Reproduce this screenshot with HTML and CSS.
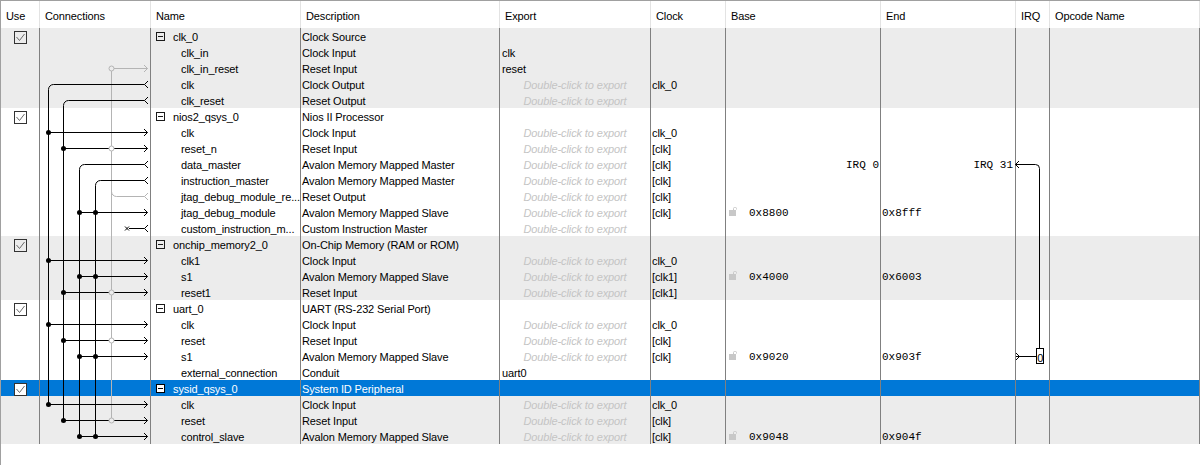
FILE: index.html
```html
<!DOCTYPE html>
<html>
<head>
<meta charset="utf-8">
<link rel="stylesheet" href="styles.css">
</head>
<body>
<div class="tbl">
  <div class="hdr">
    <div class="c u">Use</div><div class="c cn">Connections</div><div class="c nm">Name</div><div class="c ds">Description</div><div class="c ex">Export</div><div class="c ck">Clock</div><div class="c bs">Base</div><div class="c en">End</div><div class="c iq">IRQ</div><div class="c op">Opcode Name</div>
  </div>
  <div class="rows">
    <!-- clk_0 -->
    <div class="row g"><div class="c u"><svg class="cb" viewBox="0 0 13 13"><rect x="0.5" y="0.5" width="12" height="12"/><path d="M2.5 6L5.5 9.5L10.5 3"/></svg></div><div class="c cn"></div><div class="c nm mod"><svg class="exp" viewBox="0 0 9 9"><rect x="0.5" y="0.5" width="8" height="8"/><path d="M2 4.5H7"/></svg><span class="lbl">clk_0</span></div><div class="c ds">Clock Source</div><div class="c ex"></div><div class="c ck"></div><div class="c bs"></div><div class="c en"></div><div class="c iq"></div><div class="c op"></div></div>
    <div class="row g"><div class="c u"></div><div class="c cn"></div><div class="c nm">clk_in</div><div class="c ds">Clock Input</div><div class="c ex">clk</div><div class="c ck"></div><div class="c bs"></div><div class="c en"></div><div class="c iq"></div><div class="c op"></div></div>
    <div class="row g"><div class="c u"></div><div class="c cn"></div><div class="c nm">clk_in_reset</div><div class="c ds">Reset Input</div><div class="c ex">reset</div><div class="c ck"></div><div class="c bs"></div><div class="c en"></div><div class="c iq"></div><div class="c op"></div></div>
    <div class="row g"><div class="c u"></div><div class="c cn"></div><div class="c nm">clk</div><div class="c ds">Clock Output</div><div class="c ex dc">Double-click to export</div><div class="c ck">clk_0</div><div class="c bs"></div><div class="c en"></div><div class="c iq"></div><div class="c op"></div></div>
    <div class="row g"><div class="c u"></div><div class="c cn"></div><div class="c nm">clk_reset</div><div class="c ds">Reset Output</div><div class="c ex dc">Double-click to export</div><div class="c ck"></div><div class="c bs"></div><div class="c en"></div><div class="c iq"></div><div class="c op"></div></div>
    <!-- nios2 -->
    <div class="row w"><div class="c u"><svg class="cb" viewBox="0 0 13 13"><rect x="0.5" y="0.5" width="12" height="12"/><path d="M2.5 6L5.5 9.5L10.5 3"/></svg></div><div class="c cn"></div><div class="c nm mod"><svg class="exp" viewBox="0 0 9 9"><rect x="0.5" y="0.5" width="8" height="8"/><path d="M2 4.5H7"/></svg><span class="lbl">nios2_qsys_0</span></div><div class="c ds">Nios II Processor</div><div class="c ex"></div><div class="c ck"></div><div class="c bs"></div><div class="c en"></div><div class="c iq"></div><div class="c op"></div></div>
    <div class="row w"><div class="c u"></div><div class="c cn"></div><div class="c nm">clk</div><div class="c ds">Clock Input</div><div class="c ex dc">Double-click to export</div><div class="c ck">clk_0</div><div class="c bs"></div><div class="c en"></div><div class="c iq"></div><div class="c op"></div></div>
    <div class="row w"><div class="c u"></div><div class="c cn"></div><div class="c nm">reset_n</div><div class="c ds">Reset Input</div><div class="c ex dc">Double-click to export</div><div class="c ck">[clk]</div><div class="c bs"></div><div class="c en"></div><div class="c iq"></div><div class="c op"></div></div>
    <div class="row w"><div class="c u"></div><div class="c cn"></div><div class="c nm">data_master</div><div class="c ds">Avalon Memory Mapped Master</div><div class="c ex dc">Double-click to export</div><div class="c ck">[clk]</div><div class="c bs r">IRQ 0</div><div class="c en r">IRQ 31</div><div class="c iq"></div><div class="c op"></div></div>
    <div class="row w"><div class="c u"></div><div class="c cn"></div><div class="c nm">instruction_master</div><div class="c ds">Avalon Memory Mapped Master</div><div class="c ex dc">Double-click to export</div><div class="c ck">[clk]</div><div class="c bs"></div><div class="c en"></div><div class="c iq"></div><div class="c op"></div></div>
    <div class="row w"><div class="c u"></div><div class="c cn"></div><div class="c nm">jtag_debug_module_re...</div><div class="c ds">Reset Output</div><div class="c ex dc">Double-click to export</div><div class="c ck">[clk]</div><div class="c bs"></div><div class="c en"></div><div class="c iq"></div><div class="c op"></div></div>
    <div class="row w"><div class="c u"></div><div class="c cn"></div><div class="c nm">jtag_debug_module</div><div class="c ds">Avalon Memory Mapped Slave</div><div class="c ex dc">Double-click to export</div><div class="c ck">[clk]</div><div class="c bs"><svg class="lock" viewBox="0 0 9 9"><rect x="0" y="3" width="7" height="6"/><path d="M4.5 3.5V1.5Q4.5 0.5 5.5 0.5H6.5Q7.5 0.5 7.5 1.5V2.5"/></svg><span class="hex">0x8800</span></div><div class="c en">0x8fff</div><div class="c iq"></div><div class="c op"></div></div>
    <div class="row w"><div class="c u"></div><div class="c cn"></div><div class="c nm">custom_instruction_m...</div><div class="c ds">Custom Instruction Master</div><div class="c ex dc">Double-click to export</div><div class="c ck"></div><div class="c bs"></div><div class="c en"></div><div class="c iq"></div><div class="c op"></div></div>
    <!-- onchip -->
    <div class="row g"><div class="c u"><svg class="cb" viewBox="0 0 13 13"><rect x="0.5" y="0.5" width="12" height="12"/><path d="M2.5 6L5.5 9.5L10.5 3"/></svg></div><div class="c cn"></div><div class="c nm mod"><svg class="exp" viewBox="0 0 9 9"><rect x="0.5" y="0.5" width="8" height="8"/><path d="M2 4.5H7"/></svg><span class="lbl">onchip_memory2_0</span></div><div class="c ds">On-Chip Memory (RAM or ROM)</div><div class="c ex"></div><div class="c ck"></div><div class="c bs"></div><div class="c en"></div><div class="c iq"></div><div class="c op"></div></div>
    <div class="row g"><div class="c u"></div><div class="c cn"></div><div class="c nm">clk1</div><div class="c ds">Clock Input</div><div class="c ex dc">Double-click to export</div><div class="c ck">clk_0</div><div class="c bs"></div><div class="c en"></div><div class="c iq"></div><div class="c op"></div></div>
    <div class="row g"><div class="c u"></div><div class="c cn"></div><div class="c nm">s1</div><div class="c ds">Avalon Memory Mapped Slave</div><div class="c ex dc">Double-click to export</div><div class="c ck">[clk1]</div><div class="c bs"><svg class="lock" viewBox="0 0 9 9"><rect x="0" y="3" width="7" height="6"/><path d="M4.5 3.5V1.5Q4.5 0.5 5.5 0.5H6.5Q7.5 0.5 7.5 1.5V2.5"/></svg><span class="hex">0x4000</span></div><div class="c en">0x6003</div><div class="c iq"></div><div class="c op"></div></div>
    <div class="row g"><div class="c u"></div><div class="c cn"></div><div class="c nm">reset1</div><div class="c ds">Reset Input</div><div class="c ex dc">Double-click to export</div><div class="c ck">[clk1]</div><div class="c bs"></div><div class="c en"></div><div class="c iq"></div><div class="c op"></div></div>
    <!-- uart -->
    <div class="row w"><div class="c u"><svg class="cb" viewBox="0 0 13 13"><rect x="0.5" y="0.5" width="12" height="12"/><path d="M2.5 6L5.5 9.5L10.5 3"/></svg></div><div class="c cn"></div><div class="c nm mod"><svg class="exp" viewBox="0 0 9 9"><rect x="0.5" y="0.5" width="8" height="8"/><path d="M2 4.5H7"/></svg><span class="lbl">uart_0</span></div><div class="c ds">UART (RS-232 Serial Port)</div><div class="c ex"></div><div class="c ck"></div><div class="c bs"></div><div class="c en"></div><div class="c iq"></div><div class="c op"></div></div>
    <div class="row w"><div class="c u"></div><div class="c cn"></div><div class="c nm">clk</div><div class="c ds">Clock Input</div><div class="c ex dc">Double-click to export</div><div class="c ck">clk_0</div><div class="c bs"></div><div class="c en"></div><div class="c iq"></div><div class="c op"></div></div>
    <div class="row w"><div class="c u"></div><div class="c cn"></div><div class="c nm">reset</div><div class="c ds">Reset Input</div><div class="c ex dc">Double-click to export</div><div class="c ck">[clk]</div><div class="c bs"></div><div class="c en"></div><div class="c iq"></div><div class="c op"></div></div>
    <div class="row w"><div class="c u"></div><div class="c cn"></div><div class="c nm">s1</div><div class="c ds">Avalon Memory Mapped Slave</div><div class="c ex dc">Double-click to export</div><div class="c ck">[clk]</div><div class="c bs"><svg class="lock" viewBox="0 0 9 9"><rect x="0" y="3" width="7" height="6"/><path d="M4.5 3.5V1.5Q4.5 0.5 5.5 0.5H6.5Q7.5 0.5 7.5 1.5V2.5"/></svg><span class="hex">0x9020</span></div><div class="c en">0x903f</div><div class="c iq"></div><div class="c op"></div></div>
    <div class="row w"><div class="c u"></div><div class="c cn"></div><div class="c nm">external_connection</div><div class="c ds">Conduit</div><div class="c ex">uart0</div><div class="c ck"></div><div class="c bs"></div><div class="c en"></div><div class="c iq"></div><div class="c op"></div></div>
    <!-- sysid -->
    <div class="row sel"><div class="c u"><svg class="cb" viewBox="0 0 13 13"><rect x="0.5" y="0.5" width="12" height="12"/><path d="M2.5 6L5.5 9.5L10.5 3"/></svg></div><div class="c cn"></div><div class="c nm mod"><svg class="exp" viewBox="0 0 9 9"><rect x="0.5" y="0.5" width="8" height="8"/><path d="M2 4.5H7"/></svg><span class="lbl">sysid_qsys_0</span></div><div class="c ds">System ID Peripheral</div><div class="c ex"></div><div class="c ck"></div><div class="c bs"></div><div class="c en"></div><div class="c iq"></div><div class="c op"></div></div>
    <div class="row g"><div class="c u"></div><div class="c cn"></div><div class="c nm">clk</div><div class="c ds">Clock Input</div><div class="c ex dc">Double-click to export</div><div class="c ck">clk_0</div><div class="c bs"></div><div class="c en"></div><div class="c iq"></div><div class="c op"></div></div>
    <div class="row g"><div class="c u"></div><div class="c cn"></div><div class="c nm">reset</div><div class="c ds">Reset Input</div><div class="c ex dc">Double-click to export</div><div class="c ck">[clk]</div><div class="c bs"></div><div class="c en"></div><div class="c iq"></div><div class="c op"></div></div>
    <div class="row g"><div class="c u"></div><div class="c cn"></div><div class="c nm">control_slave</div><div class="c ds">Avalon Memory Mapped Slave</div><div class="c ex dc">Double-click to export</div><div class="c ck">[clk]</div><div class="c bs"><svg class="lock" viewBox="0 0 9 9"><rect x="0" y="3" width="7" height="6"/><path d="M4.5 3.5V1.5Q4.5 0.5 5.5 0.5H6.5Q7.5 0.5 7.5 1.5V2.5"/></svg><span class="hex">0x9048</span></div><div class="c en">0x904f</div><div class="c iq"></div><div class="c op"></div></div>

    <svg class="wires" viewBox="0 0 111 416">
      <g class="gw">
        <path d="M71.5 43V390"/>
        <path d="M74 40.5H107.5"/>
        <polyline points="104,37 107.5,40.5 104,44"/>
        <path d="M104.5 168.5H76.5A5 5 0 0 1 71.5 163.5"/>
        <polyline points="108,165 104.5,168.5 108,172"/>
      </g>
      <g class="bw">
        <path d="M104.5 56.5H13.5A5 5 0 0 0 8.5 61.5V376.5"/>
        <path d="M104.5 72.5H28.5A5 5 0 0 0 23.5 77.5V392.5"/>
        <path d="M104.5 136.5H44.5A5 5 0 0 0 39.5 141.5V408.5"/>
        <path d="M104.5 152.5H60.5A5 5 0 0 0 55.5 157.5V408.5"/>
        <polyline points="108,53 104.5,56.5 108,60"/>
        <polyline points="108,69 104.5,72.5 108,76"/>
        <polyline points="108,133 104.5,136.5 108,140"/>
        <polyline points="108,149 104.5,152.5 108,156"/>
        <polyline points="108,197 104.5,200.5 108,204"/>
        <path d="M89 200.5H104.5M85 198.5L89 202.5M89 198.5L85 202.5"/>
        <path d="M8.5 104.5H107.5M23.5 120.5H107.5M39.5 184.5H107.5M8.5 232.5H107.5M39.5 248.5H107.5M23.5 264.5H107.5M8.5 296.5H107.5M23.5 312.5H107.5M39.5 328.5H107.5M8.5 376.5H107.5M23.5 392.5H107.5M39.5 408.5H107.5"/>
        <polyline points="104,101 107.5,104.5 104,108"/>
        <polyline points="104,117 107.5,120.5 104,124"/>
        <polyline points="104,181 107.5,184.5 104,188"/>
        <polyline points="104,229 107.5,232.5 104,236"/>
        <polyline points="104,245 107.5,248.5 104,252"/>
        <polyline points="104,261 107.5,264.5 104,268"/>
        <polyline points="104,293 107.5,296.5 104,300"/>
        <polyline points="104,309 107.5,312.5 104,316"/>
        <polyline points="104,325 107.5,328.5 104,332"/>
        <polyline points="104,373 107.5,376.5 104,380"/>
        <polyline points="104,389 107.5,392.5 104,396"/>
        <polyline points="104,405 107.5,408.5 104,412"/>
      </g>
      <g class="dots">
        <circle cx="8.5" cy="104.5" r="2.5"/><circle cx="8.5" cy="232.5" r="2.5"/><circle cx="8.5" cy="296.5" r="2.5"/><circle cx="8.5" cy="376.5" r="2.5"/>
        <circle cx="23.5" cy="120.5" r="2.5"/><circle cx="23.5" cy="264.5" r="2.5"/><circle cx="23.5" cy="312.5" r="2.5"/><circle cx="23.5" cy="392.5" r="2.5"/>
        <circle cx="39.5" cy="184.5" r="2.5"/><circle cx="39.5" cy="248.5" r="2.5"/><circle cx="39.5" cy="328.5" r="2.5"/><circle cx="39.5" cy="408.5" r="2.5"/>
        <circle cx="55.5" cy="184.5" r="2.5"/><circle cx="55.5" cy="248.5" r="2.5"/><circle cx="55.5" cy="328.5" r="2.5"/><circle cx="55.5" cy="408.5" r="2.5"/>
      </g>
      <g class="rings">
        <circle class="rg" cx="71.5" cy="40.5" r="2.5"/>
        <circle class="rw" cx="71.5" cy="120.5" r="2.5"/>
        <circle class="rg" cx="71.5" cy="264.5" r="2.5"/>
        <circle class="rw" cx="71.5" cy="312.5" r="2.5"/>
        <circle class="rg" cx="71.5" cy="392.5" r="2.5"/>
      </g>
    </svg>

    <svg class="irqw" viewBox="0 0 40 416">
      <g class="bw">
        <path d="M5.5 136.5H25.5A4 4 0 0 1 29.5 140.5V320.5"/>
        <polyline points="9,133 5.5,136.5 9,140"/>
        <path d="M6 328.5H26.5"/>
        <polyline points="6,325 9.5,328.5 6,332"/>
        <rect x="26.5" y="320.5" width="7" height="15" fill="#fff"/>
      </g>
      <text x="30.2" y="333.5" class="irqn">0</text>
    </svg>
  </div>
</div>
</body>
</html>
```

FILE: styles.css
```css
* { box-sizing: border-box; }
html, body { margin: 0; background: #fff; }
body {
  font-family: "Liberation Sans", Arial, sans-serif;
  font-size: 11px;
  letter-spacing: -0.12px;
  color: #000;
}
.tbl {
  width: 1200px;
  height: 465px;
  border-left: 1px solid #a0a0a0;
  border-top: 1px solid #a0a0a0;
}
.hdr { display: flex; height: 27px; background: #fff; }
.hdr .c {
  height: 27px;
  border-right: 1px solid #e3e3e3;
  padding: 8px 0 0 5px;
  line-height: 14px;
  white-space: nowrap;
}
.rows { position: relative; }
.row { display: flex; height: 16px; }
.row .c {
  height: 16px;
  border-right: 1px solid #808080;
  padding-top: 1px;
  line-height: 16px;
  white-space: nowrap;
  overflow: hidden;
}
.g { background: #ececec; }
.w { background: #fff; }
.sel { background: #0078d7; color: #fff; }

.u { width: 39px; flex: none; }
.cn { width: 111px; flex: none; }
.nm { width: 150px; flex: none; }
.ds { width: 199px; flex: none; }
.ex { width: 151px; flex: none; }
.ck { width: 75px; flex: none; }
.bs { width: 155px; flex: none; }
.en { width: 135px; flex: none; }
.iq { width: 34px; flex: none; }
.op { width: 150px; flex: none; }

.row .u { padding: 3px 0 0 13px; }
.cb { display: block; width: 13px; height: 13px; }
.cb rect { fill: none; stroke: #333; }
.cb path { fill: none; stroke: #6a6a6a; }
.sel .cb rect { fill: #fff; }

.row .nm { padding-left: 30px; }
.row .nm.mod { padding-left: 5px; display: flex; }
.exp { width: 9px; height: 9px; margin-top: 3px; flex: none; }
.exp rect { fill: none; stroke: #1a1a1a; }
.exp path { stroke: #1a1a1a; }
.sel .exp rect { fill: #fff; stroke: #000; }
.sel .exp path { stroke: #000; }
.lbl { margin-left: 8px; }

.row .ds { padding-left: 1px; }
.row .ex { padding-left: 2px; }
.row .ex.dc {
  padding-left: 0;
  text-align: center;
  font-style: italic;
  color: #c4c4c4;
}
.row .ck { padding-left: 1px; }
.row .bs { display: flex; padding-left: 3px; }
.lock { width: 9px; height: 9px; margin-top: 2px; flex: none; }
.lock rect { fill: #c8c8c8; }
.lock path { fill: none; stroke: #c8c8c8; }
.hex, .row .en, .row .r {
  font-family: "Liberation Mono", "Courier New", monospace;
  font-size: 11px;
  letter-spacing: 0;
}
.hex { margin-left: 11px; }
.row .en { padding-left: 1px; }
.row .bs.r { display: block; text-align: right; padding-right: 1px; }
.row .en.r { text-align: right; padding-right: 2px; }

.wires {
  position: absolute;
  left: 39px;
  top: 0;
  width: 111px;
  height: 416px;
  overflow: visible;
}
.irqw {
  position: absolute;
  left: 1009px;
  top: 0;
  width: 40px;
  height: 416px;
  overflow: visible;
}
.gw path, .gw polyline { fill: none; stroke: #b4b4b4; stroke-width: 1; }
.bw path, .bw polyline, .bw rect { fill: none; stroke: #000; stroke-width: 1; }
.bw rect { fill: #fff; }
.dots circle { fill: #000; }
.rings circle { stroke: #b4b4b4; stroke-width: 1; }
.rings .rg { fill: #ececec; }
.rings .rw { fill: #fff; }
.irqn {
  font-family: "Liberation Sans", Arial, sans-serif;
  font-size: 11px;
  text-anchor: middle;
  fill: #000;
}
```
